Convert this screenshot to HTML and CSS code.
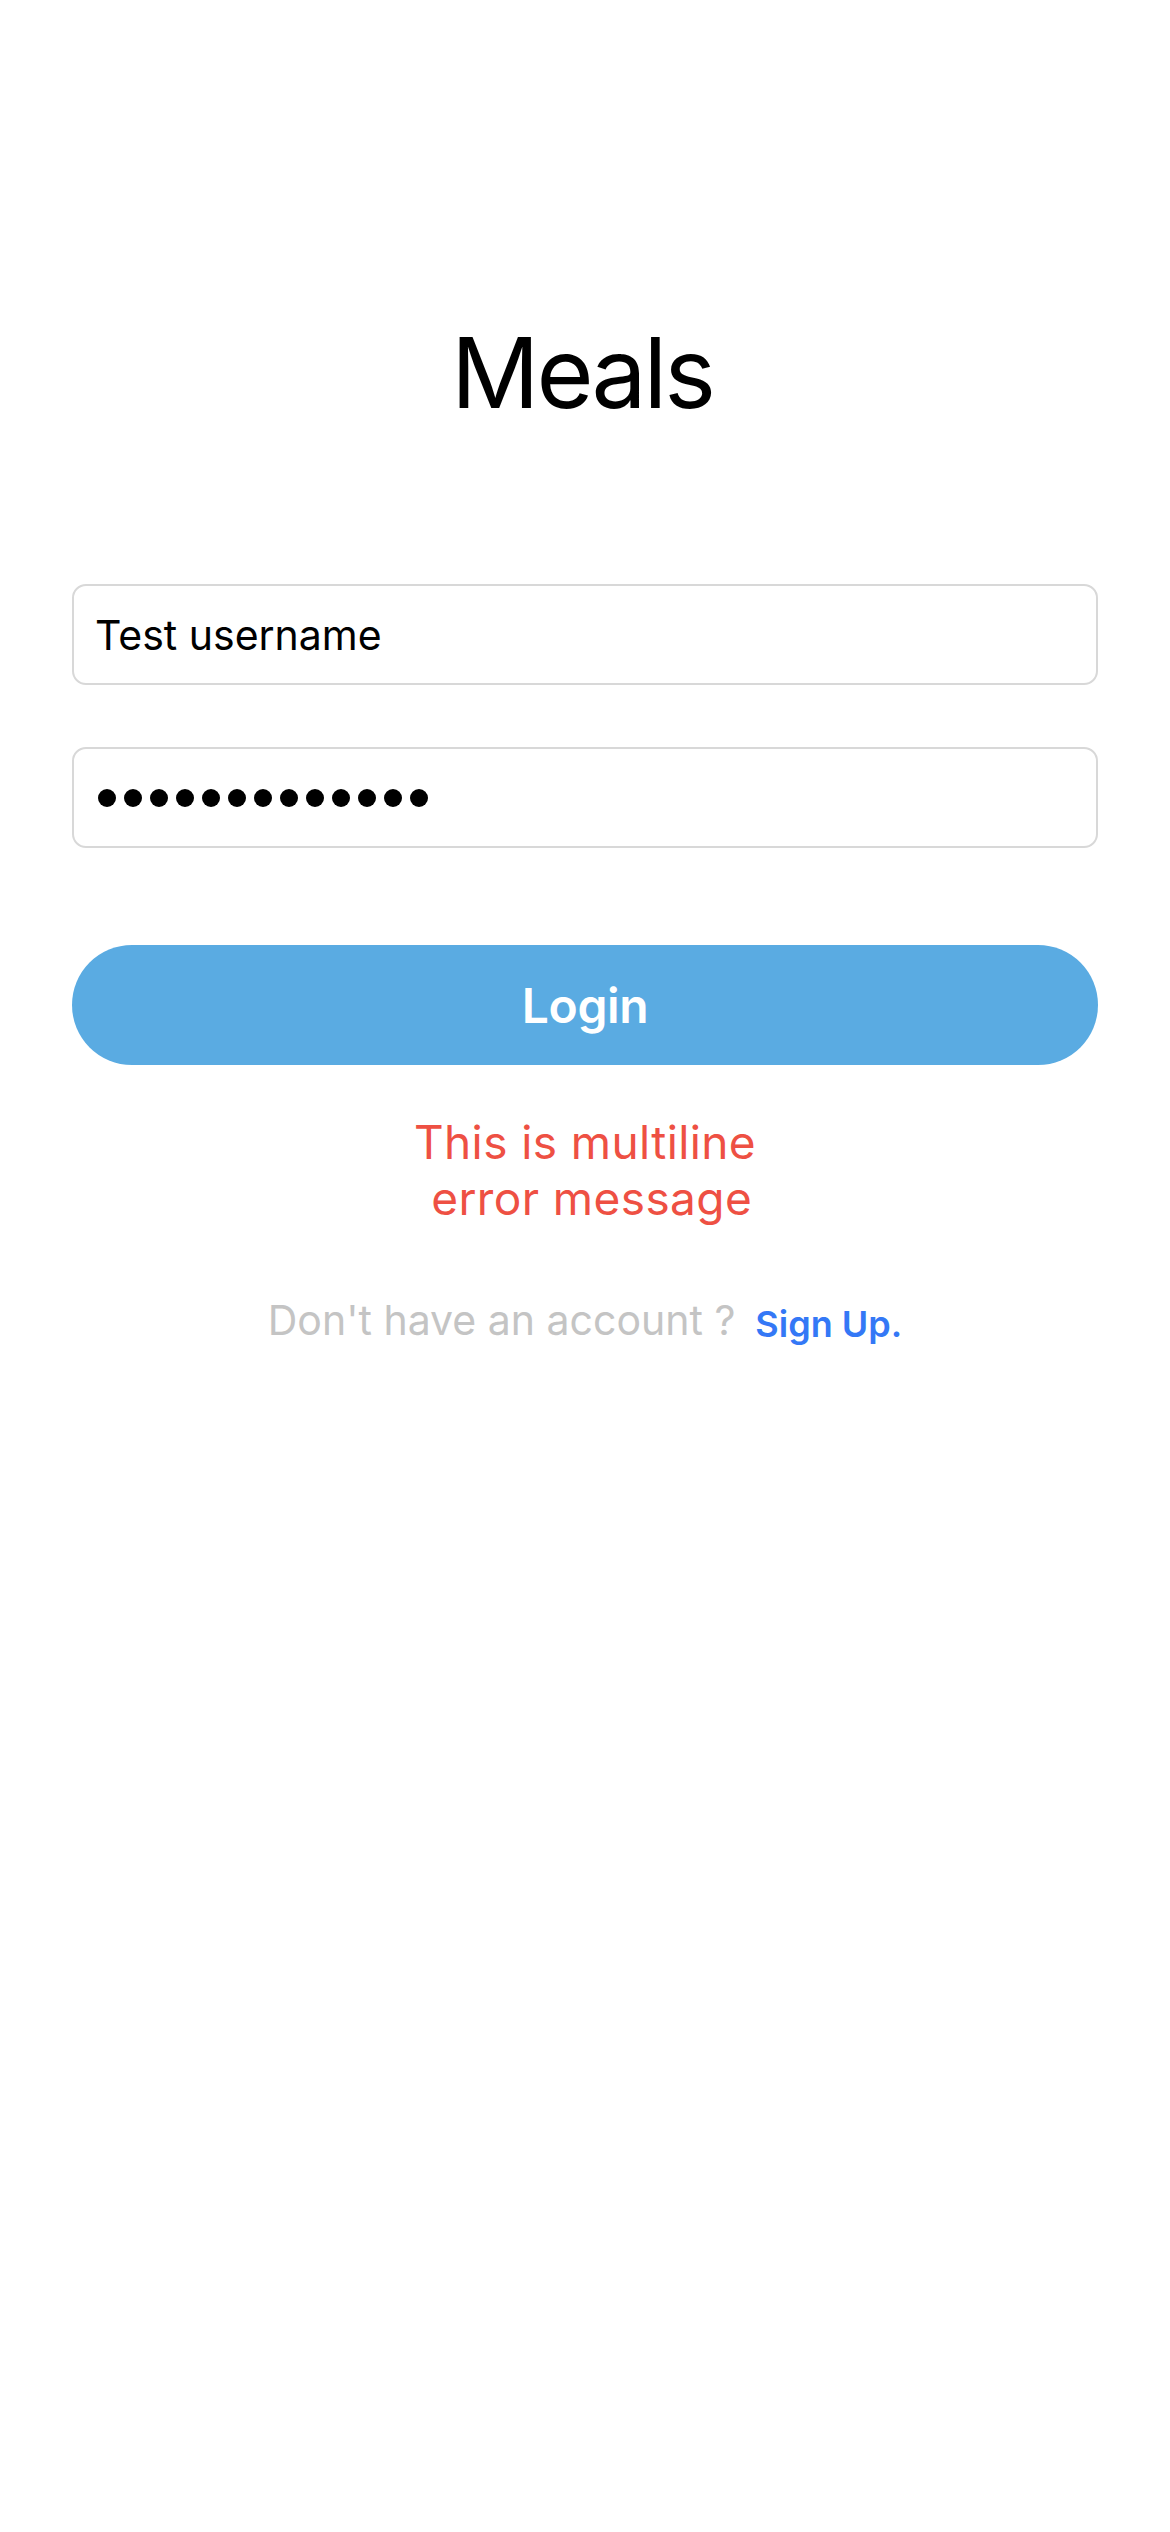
FILE: index.html
```html
<!DOCTYPE html>
<html lang="en">
<head>
<meta charset="utf-8">
<title>Meals</title>
<link rel="stylesheet" href="styles.css">
</head>
<body>
<main class="screen">
  <h1 class="title">Meals</h1>
  <div class="field field-user">
    <span class="field-text">Test username</span>
  </div>
  <div class="field field-pass" aria-label="password">
    <span class="dot"></span><span class="dot"></span><span class="dot"></span><span class="dot"></span><span class="dot"></span><span class="dot"></span><span class="dot"></span><span class="dot"></span><span class="dot"></span><span class="dot"></span><span class="dot"></span><span class="dot"></span><span class="dot"></span>
  </div>
  <button class="login-btn" type="button">Login</button>
  <p class="error">This is multiline<br><span class="indent">&nbsp;error message</span></p>
  <p class="signup-row"><span class="muted">Don't have an account ?</span><span class="link">Sign Up.</span></p>
</main>
</body>
</html>
```
FILE: styles.css
```css
html, body {
  margin: 0;
  padding: 0;
  background: #ffffff;
}
body {
  font-family: Inter, "Noto Sans", "Liberation Sans", sans-serif;
  color: #000;
}
.screen {
  width: 1170px;
  min-height: 2532px;
  box-sizing: border-box;
  padding: 313px 72px 0 72px;
  display: flex;
  flex-direction: column;
  align-items: stretch;
}
.title {
  margin: 0;
  font-size: 98px;
  font-weight: 400;
  line-height: 120px;
  text-align: center;
  letter-spacing: -3px;
  padding-right: 6px;
}
.field {
  height: 101px;
  box-sizing: border-box;
  border: 2px solid #d8d8d8;
  border-radius: 14px;
  display: flex;
  align-items: center;
  padding-left: 21px;
}
.field-user {
  margin-top: 151px;
}
.field-text {
  font-size: 41px;
  line-height: 50px;
  color: #000;
}
.field-pass {
  margin-top: 62px;
  padding-left: 24px;
  gap: 8px;
}
.dot {
  width: 18px;
  height: 18px;
  border-radius: 50%;
  background: #000;
  flex: none;
}
.login-btn {
  margin-top: 97px;
  height: 120px;
  border: none;
  border-radius: 60px;
  background: #5aabe2;
  color: #fff;
  font-family: inherit;
  font-size: 48px;
  font-weight: 600;
  letter-spacing: -0.4px;
  padding: 0;
  display: flex;
  align-items: center;
  justify-content: center;
}
.error {
  margin: 49px 0 0 0;
  text-align: center;
  color: #ee5043;
  font-size: 46px;
  letter-spacing: 0.4px;
  line-height: 56px;
}
.signup-row {
  margin: 69px 0 0 0;
  text-align: center;
  line-height: 50px;
}
.muted {
  color: #c4c4c4;
  font-size: 41px;
}
.link {
  color: #3478f6;
  font-size: 36px;
  font-weight: 600;
  margin-left: 20px;
  vertical-align: -2px;
}
```
